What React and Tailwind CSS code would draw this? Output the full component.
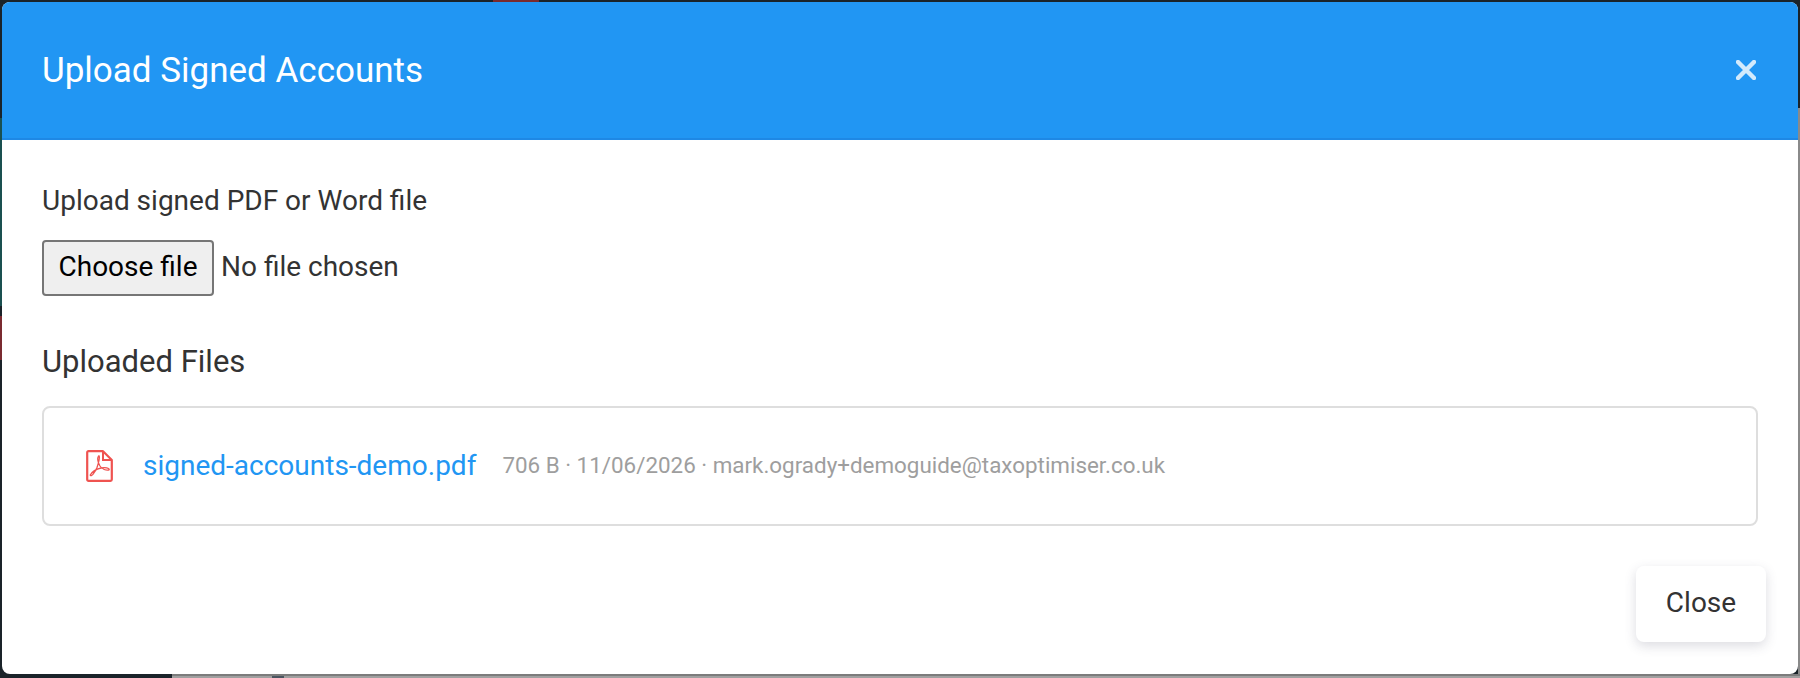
// Dimmed page that shows around the modal edges
function Backdrop() {
  return (
    <>
      <div className="absolute top-0 left-[493px] h-[2px] w-[46px] bg-[#7a2a2c]" />
      <div className="absolute left-0 top-[118px] h-[188px] w-[2px] bg-[#1a5050]" />
      <div className="absolute left-0 top-[316px] h-[44px] w-[2px] bg-[#7a2a30]" />
      <div className="absolute right-0 top-[108px] bottom-0 w-[2px] bg-[#8a8a8a]" />
      <div className="absolute bottom-0 left-[172px] right-0 h-[4px] border-t-2 border-[#7c7c7c] bg-[#a0a0a0]" />
      <div className="absolute bottom-0 left-[272px] h-[2px] w-[12px] bg-[#4a5560]" />
    </>
  );
}

function PdfIcon() {
  return (
    <svg width="27" height="32" viewBox="0 0 27 32" fill="none" stroke="#ef5350" className="shrink-0">
      <path d="M2.5 1.2H17L25.8 10V29.5a1.3 1.3 0 0 1-1.3 1.3H2.5a1.3 1.3 0 0 1-1.3-1.3V2.5a1.3 1.3 0 0 1 1.3-1.3Z" strokeWidth="2.2" strokeLinejoin="round" />
      <path d="M17 1.5V10H25.5" strokeWidth="2" />
      <path d="M12.5 6C11 8.5 12 12.5 14 16C16 19 20 20.5 23.2 19.8C23.4 18 19 17 15 18C11 19 6 22 4.2 25C5 27.5 9 22.5 11 17.5C12.2 14 14 9 13.2 6Z" strokeWidth="1.3" strokeLinejoin="round" />
    </svg>
  );
}

export default function App() {
  return (
    <div className="relative h-[678px] w-[1800px] overflow-hidden bg-[#1a2329] p-[2px] pb-[4px] font-['Roboto',sans-serif] text-[#333]">
      <Backdrop />

      <div className="relative flex h-full flex-col overflow-hidden rounded-[8px] bg-white">
        {/* Header */}
        <div className="box-content flex h-[136px] shrink-0 items-center justify-between border-b-2 border-[#1e88e5] bg-[#2196f3] pl-[40px] pr-[42px]">
          <h5 className="text-[35px] font-normal leading-none text-white">Upload Signed Accounts</h5>
          <button aria-label="Close" className="opacity-80">
            <svg width="20" height="20" viewBox="0 0 20 20">
              <path d="M2 2l16 16M18 2L2 18" stroke="white" strokeWidth="4.5" strokeLinecap="round" />
            </svg>
          </button>
        </div>

        {/* Body */}
        <div className="flex flex-1 flex-col px-[40px] pt-[45px]">
          <label className="text-[28px] leading-[32px]">Upload signed PDF or Word file</label>

          <div className="mt-[23px] flex items-center">
            <button className="h-[56px] w-[172px] rounded-[4px] border-2 border-[#767676] bg-[#efefef] pb-[2px] text-[28px] text-black">
              Choose file
            </button>
            <span className="mb-[2px] ml-[7px] text-[28px]">No file chosen</span>
          </div>

          <h6 className="mt-[48px] text-[31px] font-normal leading-[36px]">Uploaded Files</h6>

          <div className="mt-[26px] flex h-[120px] items-center rounded-[8px] border-2 border-[#dedede] pl-[42px]">
            <PdfIcon />
            <a className="ml-[30px] text-[28px] text-[#2196f3]">signed-accounts-demo.pdf</a>
            <span className="ml-[26px] text-[22.4px] text-[#9e9e9e]">
              706 B · 11/06/2026 · mark.ogrady+demoguide@taxoptimiser.co.uk
            </span>
          </div>

          <div className="mt-[40px] flex justify-end -mr-[8px]">
            <button className="h-[76px] w-[130px] rounded-[8px] bg-white pb-[2px] text-[28px] text-[#333] shadow-[0_4px_12px_rgba(60,60,90,0.18)]">
              Close
            </button>
          </div>
        </div>
      </div>
    </div>
  );
}
